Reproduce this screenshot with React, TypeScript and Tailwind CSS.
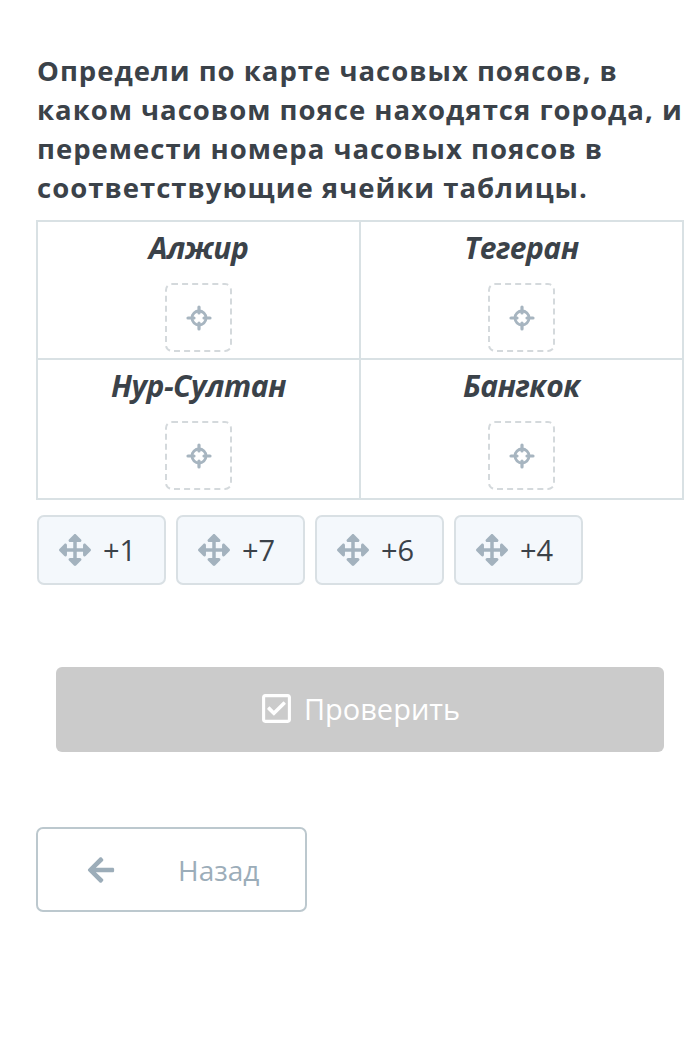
import React from "react";
import { FaArrowsAlt, FaArrowLeft, FaRegCheckSquare } from "react-icons/fa";

const cities = ["Алжир", "Тегеран", "Нур-Султан", "Бангкок"];
const zones = ["+1", "+7", "+6", "+4"];

// crosshair drawn by hand, the packaged ones are too heavy
const Target = () => (
  <svg width="26" height="26" viewBox="0 0 26 26" fill="none" stroke="#a7b5c0">
    <circle cx="13" cy="13" r="7" strokeWidth="2.8" />
    <path d="M13 2v6M13 18v6M2 13h6M18 13h6" strokeWidth="3.2" strokeLinecap="round" />
  </svg>
);

const App = () => {
  return (
    <div className="w-[695px] h-[1048px] bg-white pl-[36px] pr-[11px] pt-[51px]" style={{ fontFamily: "'Open Sans', sans-serif" }}>
      <h1 className="text-[27.5px] leading-[39px] font-bold tracking-[1px] text-[#3b4249] pl-[1px] whitespace-nowrap">
        Определи по карте часовых поясов, в<br />
        каком часовом поясе находятся города, и<br />
        перемести номера часовых поясов в<br />
        соответствующие ячейки таблицы.
      </h1>

      {/* table of cities */}
      <div className="mt-[13px] w-[648px] grid grid-cols-[323px_1fr] border-2 border-[#d9e1e4]">
        {cities.map((c, i) => (
          <div
            key={c}
            className={
              "h-[138px] flex flex-col items-center pt-[6px] border-[#d9e1e4] " +
              (i % 2 === 0 ? "border-r-2 " : "") +
              (i < 2 ? "border-b-2" : "")
            }
          >
            <div className="text-[30px] leading-[40px] font-bold italic tracking-[-0.5px] text-[#3b4249]">{c}</div>
            <div className="mt-[15px] w-[67px] h-[69px] rounded-[7px] border-2 border-dashed border-[#d4d9dc] flex items-center justify-center">
              <Target />
            </div>
          </div>
        ))}
      </div>

      {/* draggable numbers */}
      <div className="mt-[15px] flex gap-[10px] pl-[1px]">
        {zones.map((z) => (
          <div
            key={z}
            className="w-[129px] h-[70px] rounded-[7px] border-2 border-[#d9e0e4] bg-[#f4f8fc] flex items-center pl-[20px] gap-[12px]"
          >
            <FaArrowsAlt className="text-[#a3b2be]" size={32} />
            <span className="text-[29px] text-[#3b4249]">{z}</span>
          </div>
        ))}
      </div>

      <div className="mt-[82px] mx-[20px] h-[85px] rounded-[6px] bg-[#cbcbcb] flex items-center justify-center gap-[11px] pb-[2px]">
        <FaRegCheckSquare className="text-white" size={33} />
        <span className="text-[29px] text-white">Проверить</span>
      </div>

      <div className="mt-[75px] w-[271px] h-[85px] rounded-[7px] border-2 border-[#bcc8ce] flex items-center pl-[48px]">
        <FaArrowLeft className="text-[#9cadb9]" size={30} />
        <span className="ml-[62px] text-[28px] text-[#9cadb9]">Назад</span>
      </div>
    </div>
  );
};

export default App;
